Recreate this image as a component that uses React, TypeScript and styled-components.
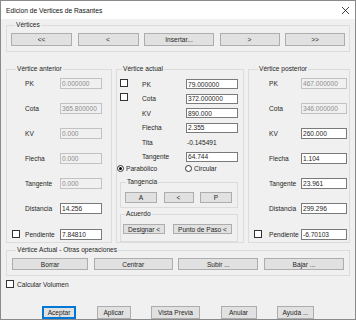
import styled, { createGlobalStyle } from "styled-components"

const GlobalStyle = createGlobalStyle`
    html, body {
        margin: 0;
        padding: 0;
        background: #ffffff;
    }
    body {
        font-family: "Liberation Sans", Arial, sans-serif;
    }
    * {
        box-sizing: border-box;
    }
`

const Window = styled.div`
    width: 356px;
    height: 320px;
    border: 1px solid #8a8a8a;
    background: #f0f0f0;
    display: flex;
    flex-direction: column;
    font-size: 6.6px;
    color: #262626;
    overflow: hidden;
`

const TitleBar = styled.div`
    height: 18px;
    flex-shrink: 0;
    background: #ffffff;
    display: flex;
    align-items: center;
    justify-content: space-between;
    padding: 0 5px 0 5px;
    font-size: 6.7px;
    color: #111;
`

const Body = styled.div`
    flex: 1;
    display: flex;
    flex-direction: column;
    padding: 0 5px;
`

interface GroupProps {
    $w?: number
    $pad?: string
    $mt?: number
}

const Group = styled.fieldset<GroupProps>`
    margin: ${p => p.$mt ?? 0}px 0 0 0;
    border: 1px solid #dcdcdc;
    padding: ${p => p.$pad ?? "0 5px"};
    min-width: 0;
    ${p => p.$w ? `width: ${p.$w}px; flex-shrink: 0;` : "flex: 1;"}
    display: flex;
    flex-direction: column;
`

const Legend = styled.legend<{ $ml?: number }>`
    margin-left: ${p => p.$ml ?? 4}px;
    padding: 0 1px;
    line-height: 8px;
    height: 8px;
    font-size: 6.6px;
`

interface BtnProps {
    $w: number
    $h: number
    $focus?: boolean
}

const Button = styled.button<BtnProps>`
    width: ${p => p.$w}px;
    height: ${p => p.$h}px;
    flex-shrink: 0;
    padding: 0;
    margin: 0;
    font-family: inherit;
    font-size: 6.6px;
    color: #262626;
    background: #e1e1e1;
    border: 1px solid ${p => p.$focus ? "#0078d7" : "#adadad"};
    box-shadow: ${p => p.$focus ? "inset 0 0 0 1px #0078d7" : "none"};
    border-radius: 0;
    white-space: nowrap;
`

const ButtonRow = styled.div<{ $gap: number; $pl?: number; $between?: boolean }>`
    display: flex;
    gap: ${p => p.$gap}px;
    padding-left: ${p => p.$pl ?? 0}px;
    justify-content: ${p => p.$between ? "space-between" : "flex-start"};
`

const Columns = styled.div`
    display: flex;
    gap: 4px;
    margin-top: 13px;
    height: 178px;
`

const FieldGrid = styled.div<{ $cols: string; $row: number; $gap: number; $pt: number }>`
    display: grid;
    grid-template-columns: ${p => p.$cols};
    grid-auto-rows: ${p => p.$row}px;
    row-gap: ${p => p.$gap}px;
    padding-top: ${p => p.$pt}px;
    align-items: center;
`

const Label = styled.span`
    white-space: nowrap;
`

const Field = styled.input`
    width: 100%;
    height: 100%;
    margin: 0;
    padding: 0 1px;
    font-family: inherit;
    font-size: 6.6px;
    color: #262626;
    background: #ffffff;
    border: 1px solid #7a7a7a;
    border-radius: 0;
    outline: none;

    &:disabled {
        background: #f0f0f0;
        color: #8d8d8d;
        border-color: #c2c2c2;
    }
`

const Value = styled.span`
    padding-left: 1px;
`

const Check = styled.span<{ $up?: number }>`
    display: block;
    width: 8px;
    height: 8px;
    border: 1px solid #333;
    background: #fff;
    margin-top: ${p => -(p.$up ?? 0)}px;
`

const Cell = styled.div`
    display: flex;
    align-items: center;
`

const RadioRow = styled.div`
    display: flex;
    height: 9px;
    margin-top: 2px;
    margin-left: -3px;
    align-items: center;
`

const RadioItem = styled.label<{ $w: number }>`
    width: ${p => p.$w}px;
    display: flex;
    align-items: center;
    gap: 2px;
`

const RadioDot = styled.span<{ $on?: boolean }>`
    width: 7px;
    height: 7px;
    border-radius: 50%;
    border: 1px solid #333;
    background: #fff;
    display: flex;
    align-items: center;
    justify-content: center;

    &::after {
        content: "";
        width: 3px;
        height: 3px;
        border-radius: 50%;
        background: ${p => p.$on ? "#000" : "transparent"};
    }
`

const CheckLine = styled.div`
    display: flex;
    align-items: center;
    gap: 3px;
    height: 9px;
    margin-top: 3.5px;
`

const Footer = styled.div`
    display: flex;
    gap: 20.5px;
    padding-left: 36px;
    margin-top: 17.5px;
`

interface Row {
    label: string
    value: string
    disabled?: boolean
    check?: boolean
}

const anterior: Row[] = [
    { label: "PK", value: "0.000000", disabled: true },
    { label: "Cota", value: "365.800000", disabled: true },
    { label: "KV", value: "0.000", disabled: true },
    { label: "Flecha", value: "0.000", disabled: true },
    { label: "Tangente", value: "0.000", disabled: true },
    { label: "Distancia", value: "14.256" },
    { label: "Pendiente", value: "7.84810", check: true },
]

const posterior: Row[] = [
    { label: "PK", value: "467.000000", disabled: true },
    { label: "Cota", value: "346.000000", disabled: true },
    { label: "KV", value: "260.000" },
    { label: "Flecha", value: "1.104" },
    { label: "Tangente", value: "23.961" },
    { label: "Distancia", value: "299.296" },
    { label: "Pendiente", value: "-6.70103", check: true },
]

function SideFields({ rows, cols }: { rows: Row[]; cols: string }) {
    return <FieldGrid $cols={cols} $row={11} $gap={14.1} $pt={5}>
        {rows.map(r => [
            <Cell key={r.label + "c"}>{r.check && <Check />}</Cell>,
            <Label key={r.label + "l"}>{r.label}</Label>,
            <Field key={r.label + "f"} defaultValue={r.value} disabled={r.disabled} readOnly />,
        ])}
    </FieldGrid>
}

function CloseIcon() {
    return <svg width="9" height="9" viewBox="0 0 9 9">
        <path d="M1 1 L8 8 M8 1 L1 8" stroke="#111" strokeWidth="0.8" fill="none" />
    </svg>
}

function App() {
    return <>
        <GlobalStyle />
        <Window>
            <TitleBar>
                <span>Edicion de Vertices de Rasantes</span>
                <CloseIcon />
            </TitleBar>
            <Body>
                <Group $mt={2} $pad="4px 4px 5px 4px">
                    <Legend>Vértices</Legend>
                    <ButtonRow $gap={0} $between>
                        <Button $w={61} $h={13}>&lt;&lt;</Button>
                        <Button $w={61} $h={13}>&lt;</Button>
                        <Button $w={70} $h={13}>Insertar...</Button>
                        <Button $w={60} $h={13}>&gt;</Button>
                        <Button $w={60} $h={13}>&gt;&gt;</Button>
                    </ButtonRow>
                </Group>

                <Columns>
                    <Group $w={106} $pad="0 5px">
                        <Legend>Vértice anterior</Legend>
                        <SideFields rows={anterior} cols="13px 35px 42px" />
                    </Group>

                    <Group $w={128} $pad="0 5px 0 3px">
                        <Legend $ml={2}>Vértice actual</Legend>
                        <FieldGrid $cols="22px 44px 52px" $row={10} $gap={4.5} $pt={6}>
                            <Cell><Check $up={3} /></Cell>
                            <Label>PK</Label>
                            <Field defaultValue="79.000000" readOnly />
                            <Cell><Check $up={3} /></Cell>
                            <Label>Cota</Label>
                            <Field defaultValue="372.000000" readOnly />
                            <Cell />
                            <Label>KV</Label>
                            <Field defaultValue="890.000" readOnly />
                            <Cell />
                            <Label>Flecha</Label>
                            <Field defaultValue="2.355" readOnly />
                            <Cell />
                            <Label>Tita</Label>
                            <Value>-0.145491</Value>
                            <Cell />
                            <Label>Tangente</Label>
                            <Field defaultValue="64.744" readOnly />
                        </FieldGrid>
                        <RadioRow>
                            <RadioItem $w={68}><RadioDot $on />Parabólico</RadioItem>
                            <RadioItem $w={40}><RadioDot />Circular</RadioItem>
                        </RadioRow>
                        <Group $mt={5.5} $pad="6px 4px 3px 4px">
                            <Legend $ml={1}>Tangencia</Legend>
                            <ButtonRow $gap={6.5}>
                                <Button $w={32} $h={11}>A</Button>
                                <Button $w={30} $h={11}>&lt;</Button>
                                <Button $w={32} $h={11}>P</Button>
                            </ButtonRow>
                        </Group>
                        <Group $mt={2} $pad="6px 2px 5px 2px">
                            <Legend $ml={2}>Acuerdo</Legend>
                            <ButtonRow $gap={8}>
                                <Button $w={42} $h={10}>Designar &lt;</Button>
                                <Button $w={59} $h={10}>Punto de Paso &lt;</Button>
                            </ButtonRow>
                        </Group>
                    </Group>

                    <Group $pad="0 2px 0 5px">
                        <Legend>Vértice posterior</Legend>
                        <SideFields rows={posterior} cols="15px 32px 46px" />
                    </Group>
                </Columns>

                <Group $mt={3} $pad="4px 5px 4px 5px">
                    <Legend>Vértice Actual - Otras operaciones</Legend>
                    <ButtonRow $gap={0} $between>
                        <Button $w={76} $h={12}>Borrar</Button>
                        <Button $w={79} $h={12}>Centrar</Button>
                        <Button $w={80} $h={12}>Subir ...</Button>
                        <Button $w={80} $h={12}>Bajar ...</Button>
                    </ButtonRow>
                </Group>

                <CheckLine>
                    <Check />
                    <span>Calcular Volumen</span>
                </CheckLine>

                <Footer>
                    <Button $w={34} $h={13} $focus>Aceptar</Button>
                    <Button $w={34} $h={13}>Aplicar</Button>
                    <Button $w={49} $h={13}>Vista Previa</Button>
                    <Button $w={36} $h={13}>Anular</Button>
                    <Button $w={37} $h={13}>Ayuda ...</Button>
                </Footer>
            </Body>
        </Window>
    </>
}

export default App
